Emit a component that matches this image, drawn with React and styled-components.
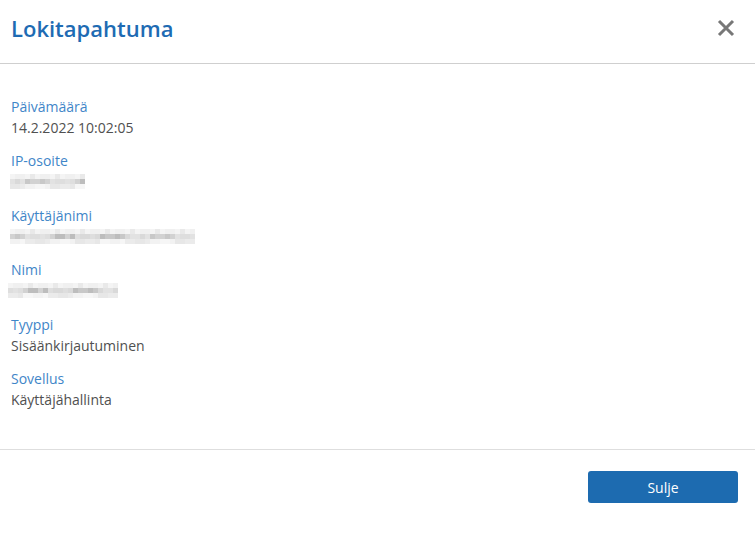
import React from "react";
import styled, { createGlobalStyle } from "styled-components";

const Global = createGlobalStyle`
  html, body { margin: 0; padding: 0; background: #fff; }
  body { font-family: "Open Sans", "Liberation Sans", sans-serif; }
`;

const Dialog = styled.div`
  width: 755px;
  height: 534px;
  background: #fff;
  display: flex;
  flex-direction: column;
`;

const Header = styled.header`
  height: 64px;
  box-sizing: border-box;
  border-bottom: 1px solid #cfcfcf;
  display: flex;
  align-items: center;
  justify-content: space-between;
  padding: 0 19px 8px 11px;
`;

const Title = styled.h1`
  margin: 0;
  font-size: 22px;
  font-weight: 600;
  color: #1e6bb3;
`;

const CloseButton = styled.button`
  border: 0;
  background: none;
  padding: 0;
  width: 20px;
  height: 20px;
  display: flex;
  cursor: pointer;
`;

const Body = styled.dl`
  margin: 0;
  padding: 32px 11px 0;
  display: flex;
  flex-direction: column;
  gap: 12.4px;
  height: 386px;
  box-sizing: border-box;
  border-bottom: 1px solid #dedede;
`;

const Field = styled.div`
  display: flex;
  flex-direction: column;
`;

const Label = styled.dt`
  font-size: 14px;
  line-height: 21px;
  color: #3f86c8;
`;

const Value = styled.dd`
  margin: 0;
  font-size: 14px;
  line-height: 21px;
  color: #505050;
  height: 21px;
  display: flex;
  align-items: center;
`;

const Footer = styled.footer`
  display: flex;
  justify-content: flex-end;
  padding: 21px 17px 0;
`;

const PrimaryButton = styled.button`
  width: 150px;
  height: 32px;
  border: 0;
  border-radius: 3px;
  background: #1d6bb0;
  color: #fff;
  font-family: "Open Sans", "Liberation Sans", sans-serif;
  font-size: 14px;
  cursor: pointer;
`;

const Mosaic = ({ cols, seed, offset = 0 }) => {
  const size = 5;
  const rows = [
    ["#f4f4f4", "#ececec", "#e6e6e6", "#f0f0f0", "#e9e9e9"],
    ["#dedede", "#d2d2d2", "#e2e2e2", "#c8c8c8", "#d9d9d9", "#bdbdbd"],
    ["#f2f2f2", "#ebebeb", "#f6f6f6", "#e7e7e7"],
  ];
  const rects = [];
  rows.forEach((palette, r) => {
    for (let c = 0; c < cols; c++) {
      const idx = (c * 7 + seed * 5 + r * 3 + ((c * c) % 5)) % palette.length;
      rects.push(
        <rect key={`${r}-${c}`} x={c * size} y={r * size} width={size} height={size} fill={palette[idx]} />
      );
    }
  });
  return (
    <svg width={cols * size} height={15} style={{ marginLeft: offset }} aria-label="piilotettu">
      {rects}
    </svg>
  );
};

const fields = [
  { label: "Päivämäärä", value: "14.2.2022 10:02:05" },
  { label: "IP-osoite", mosaic: { cols: 15, seed: 1, offset: -1 } },
  { label: "Käyttäjänimi", mosaic: { cols: 37, seed: 2, offset: -1 } },
  { label: "Nimi", mosaic: { cols: 22, seed: 3, offset: -3 } },
  { label: "Tyyppi", value: "Sisäänkirjautuminen" },
  { label: "Sovellus", value: "Käyttäjähallinta" },
];

export default function App() {
  return (
    <>
      <Global />
      <Dialog>
        <Header>
          <Title>Lokitapahtuma</Title>
          <CloseButton aria-label="Sulje">
            <svg width="20" height="20" viewBox="0 0 20 20">
              <path d="M3 3L17 17M17 3L3 17" stroke="#777" strokeWidth="3" strokeLinecap="butt" />
            </svg>
          </CloseButton>
        </Header>
        <Body>
          {fields.map((f) => (
            <Field key={f.label}>
              <Label>{f.label}</Label>
              <Value>{f.mosaic ? <Mosaic {...f.mosaic} /> : f.value}</Value>
            </Field>
          ))}
        </Body>
        <Footer>
          <PrimaryButton>Sulje</PrimaryButton>
        </Footer>
      </Dialog>
    </>
  );
}
